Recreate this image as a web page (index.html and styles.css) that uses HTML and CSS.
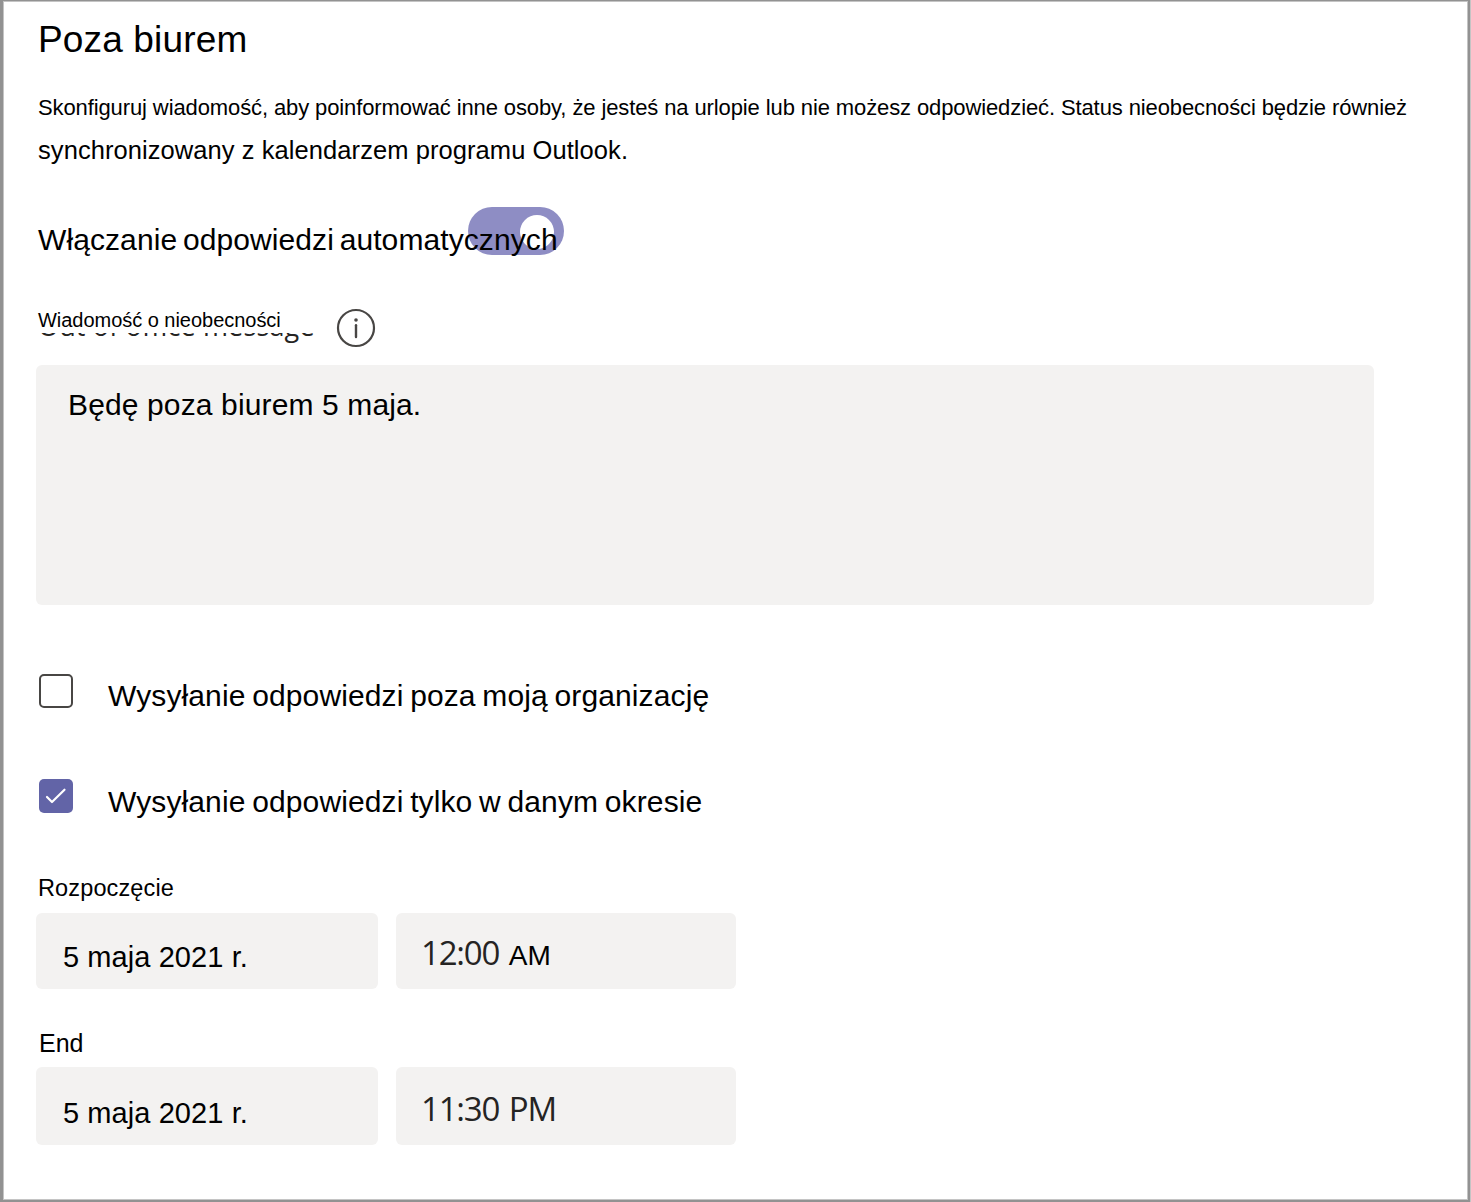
FILE: index.html
```html
<!DOCTYPE html>
<html lang="pl">

<head>
    <meta charset="UTF-8">
    <title>Poza biurem</title>
    <link rel="stylesheet" href="styles.css">
</head>

<body>
<div class="panel">
    <h1 class="title">Poza biurem</h1>
    <p class="intro">Skonfiguruj wiadomość, aby poinformować inne osoby, że jesteś na urlopie lub nie możesz odpowiedzieć. Status nieobecności będzie również</p>
    <p class="intro intro-more">synchronizowany z kalendarzem programu Outlook.</p>

    <div class="toggle-row">
        <div class="toggle"><div class="knob"></div></div>
        <label class="toggle-label">Włączanie odpowiedzi automatycznych</label>
    </div>

    <div class="message-head">
        <div class="message-label">
            <label>Wiadomość o nieobecności</label>
            <div class="under-label"><span>Out of office message</span></div>
        </div>
        <svg class="info" viewBox="0 0 40 40">
            <circle cx="20" cy="20" r="18" fill="none" stroke="#484644" stroke-width="2.2"/>
            <circle cx="20" cy="12" r="1.8" fill="#484644"/>
            <path d="M20 17.3V29" stroke="#484644" stroke-width="2.4" stroke-linecap="round"/>
        </svg>
    </div>
    <div class="message">Będę poza biurem 5 maja.</div>

    <div class="check-row">
        <div class="box"></div>
        <label>Wysyłanie odpowiedzi poza moją organizację</label>
    </div>
    <div class="check-row period">
        <div class="box checked">
            <svg viewBox="0 0 34 34"><path d="M8 18l5 5L25.5 10.7" fill="none" stroke="#fff" stroke-width="2.2" stroke-linecap="round" stroke-linejoin="round"/></svg>
        </div>
        <label>Wysyłanie odpowiedzi tylko w danym okresie</label>
    </div>

    <div class="field-label start">Rozpoczęcie</div>
    <div class="fields">
        <div class="field date">5 maja 2021 r.</div>
        <div class="field time">12:00 <span class="am">AM</span></div>
    </div>
    <div class="field-label end">End</div>
    <div class="fields fields-end">
        <div class="field date">5 maja 2021 r.</div>
        <div class="field time">11:30 PM</div>
    </div>
</div>
</body>

</html>
```
FILE: styles.css
```css
* {
    box-sizing: border-box;
}

body {
    margin: 0;
    font-family: "Liberation Sans", Arial, sans-serif;
    color: #000;
    background-color: #fff;
}

.panel {
    width: 1470px;
    height: 1202px;
    padding: 17px 0 0 32px;
    border-style: solid;
    border-color: #929292;
    border-width: 1px 2px 2px 3px;
    box-shadow: inset 0 0 0 1px #c4c4c4, 1px 0 0 #c4c4c4;
    overflow: hidden;
    white-space: nowrap;
}

.title {
    margin: 0 0 24px 3px;
    font-size: 37px;
    font-weight: normal;
    line-height: 44px;
    letter-spacing: 0.15px;
}

.intro {
    margin: 0 0 0 3px;
    font-size: 22px;
    line-height: 43px;
    letter-spacing: -0.11px;
}

.intro-more {
    font-size: 25.5px;
    letter-spacing: 0.07px;
}

.toggle-row {
    position: relative;
    height: 48px;
    margin-top: 35px;
    padding: 9px 0 0 3px;
}

.toggle {
    position: absolute;
    top: 0;
    left: 433px;
    width: 96px;
    height: 48px;
    padding: 8px 10px;
    border-radius: 24px;
    background-color: #8e8dc4;
}

.knob {
    width: 34px;
    height: 34px;
    margin-left: auto;
    border-radius: 50%;
    background-color: #fff;
}

.toggle-label {
    position: relative;
    display: block;
    font-size: 30px;
    line-height: 48px;
    letter-spacing: 0.09px;
    word-spacing: -2.7px;
}

.message-head {
    display: flex;
    height: 40px;
    margin-top: 53px;
    padding-left: 3px;
}

.message-label {
    width: 298px;
    font-size: 20px;
}

.message-label label {
    display: block;
    height: 25px;
    line-height: 25px;
    letter-spacing: -0.03px;
}

.under-label {
    height: 14px;
    overflow: hidden;
    font-family: "Open Sans", sans-serif;
    font-size: 27px;
    line-height: 4px;
    letter-spacing: 0.15px;
    color: #252423;
}

.under-label span {
    display: block;
    margin-top: -9px;
}

.info {
    width: 40px;
    height: 40px;
}

.message {
    width: 1338px;
    height: 240px;
    margin: 17px 0 69px 1px;
    padding: 20px 32px;
    border-radius: 6px;
    background-color: #f3f2f1;
    font-size: 30px;
    line-height: 40px;
    letter-spacing: 0.13px;
}

.check-row {
    display: flex;
    gap: 35px;
    height: 34px;
    margin-left: 4px;
    font-size: 30px;
    line-height: 44px;
    letter-spacing: 0.12px;
    word-spacing: -1.8px;
}

.period {
    margin-top: 71px;
    line-height: 46px;
}

.box {
    width: 34px;
    height: 34px;
    border: 2px solid #484644;
    border-radius: 5px;
}

.checked {
    border: none;
    background-color: #6264a7;
}

.checked svg {
    display: block;
}

.field-label {
    height: 30px;
    margin-left: 3px;
    line-height: 30px;
}

.start {
    margin-top: 60px;
    font-size: 23.5px;
    letter-spacing: 0.13px;
}

.end {
    margin: 39px 0 0 4px;
    font-size: 25px;
}

.fields {
    display: flex;
    gap: 18px;
    margin: 10px 0 0 1px;
}

.fields-end {
    margin-top: 9px;
}

.field {
    height: 76px;
    padding-left: 27px;
    border-radius: 6px;
    background-color: #f3f2f1;
}

.fields-end .field {
    height: 78px;
}

.date {
    width: 342px;
    font-size: 29px;
    line-height: 88px;
    letter-spacing: 0.08px;
}

.time {
    width: 340px;
    padding-left: 25px;
    font-family: "Open Sans", sans-serif;
    font-size: 33px;
    line-height: 80px;
    letter-spacing: -1.2px;
    word-spacing: 2.3px;
    color: #252423;
}

.fields-end .date {
    line-height: 92px;
}

.fields-end .time {
    line-height: 84px;
}

.am {
    font-family: "Liberation Sans", Arial, sans-serif;
    font-size: 28px;
    letter-spacing: 0;
    color: #000;
}
```
